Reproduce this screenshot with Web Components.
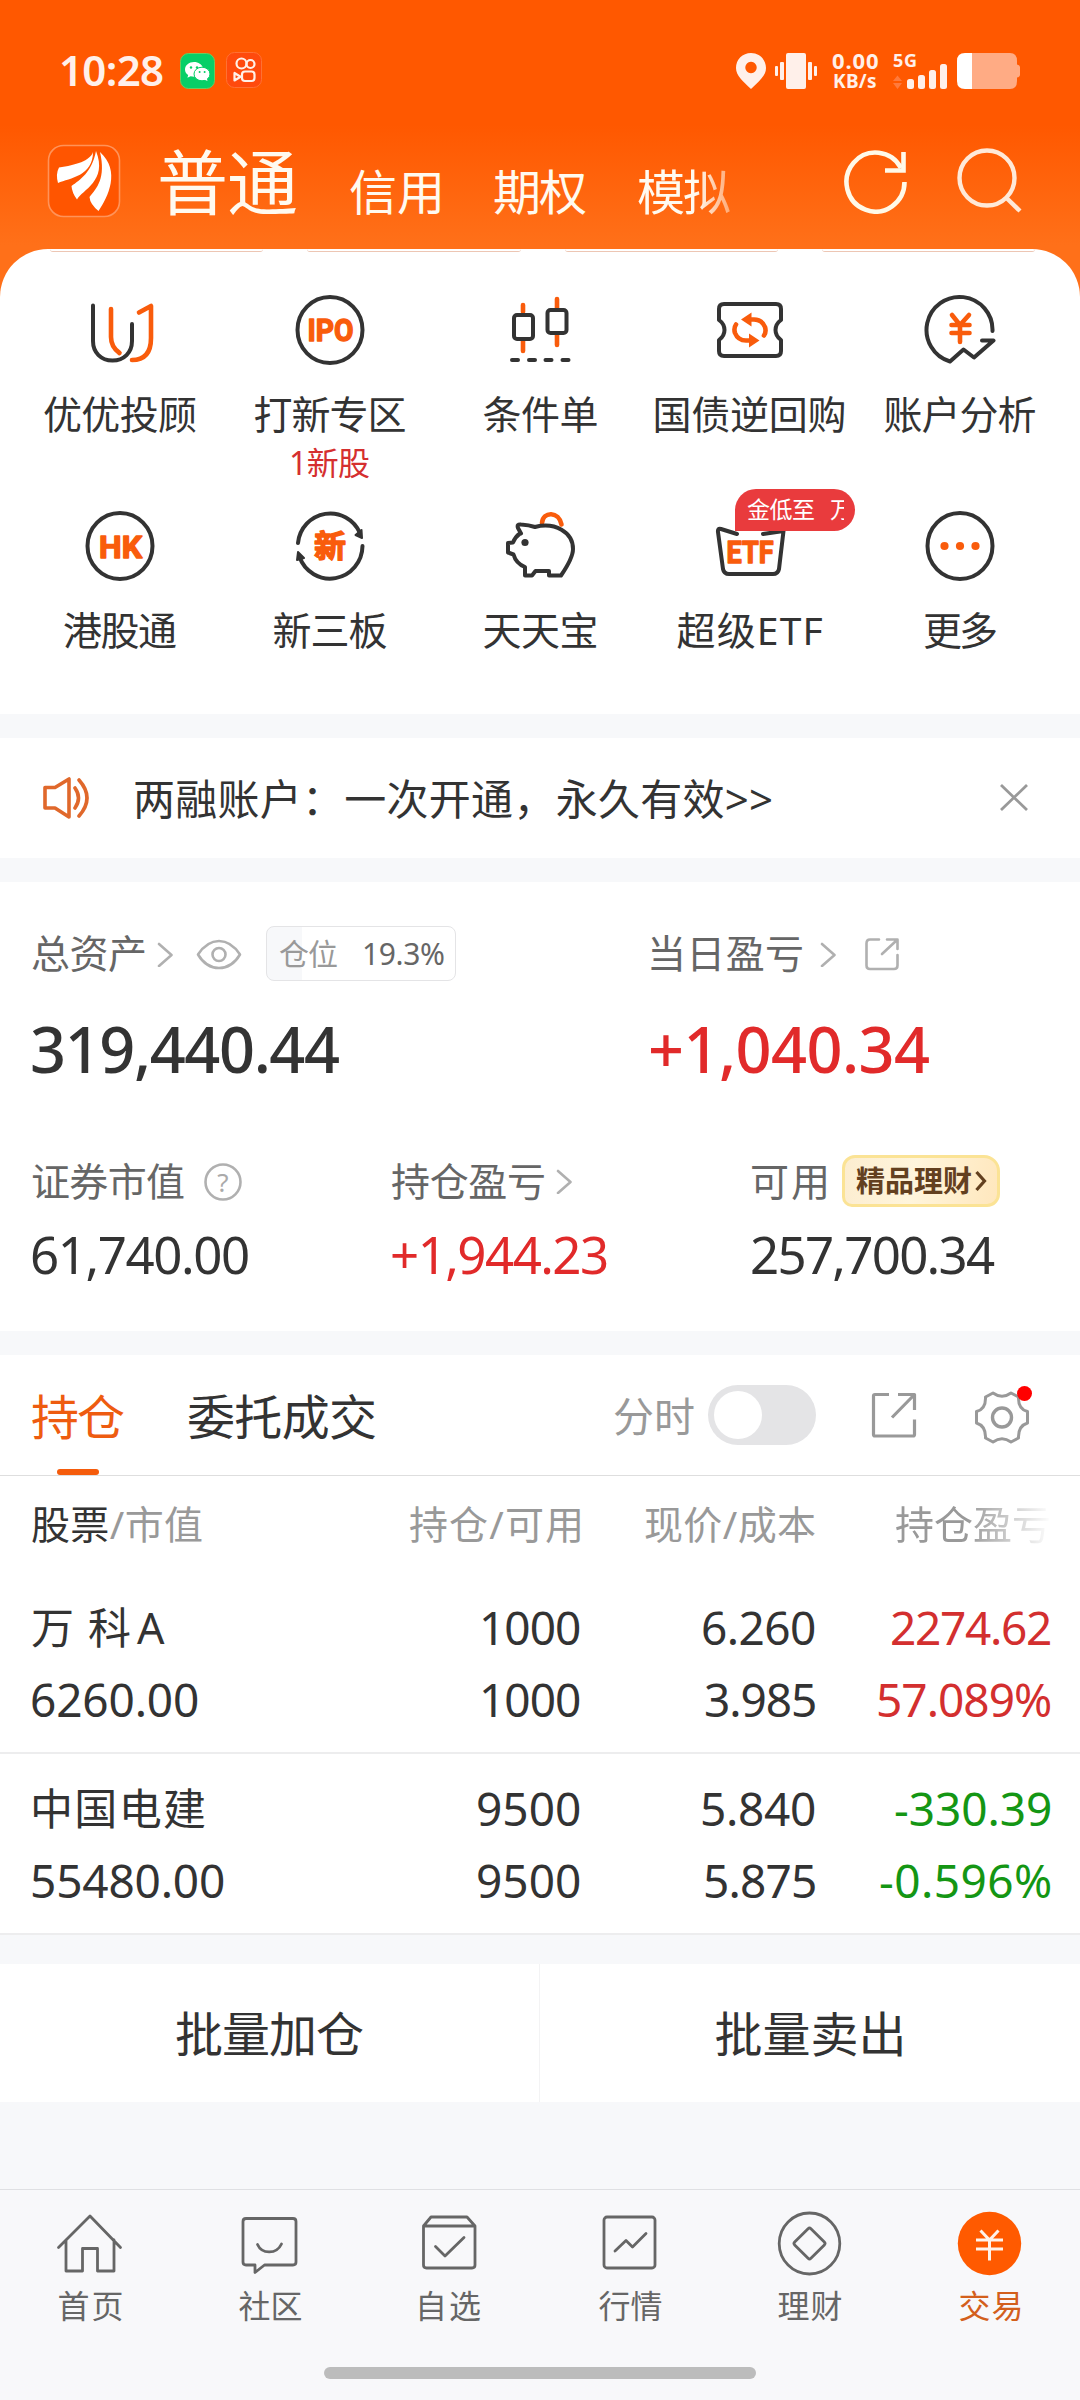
<!DOCTYPE html>
<html lang="zh-CN">
<head>
<meta charset="utf-8">
<title>交易</title>
<style>
html,body{margin:0;padding:0}
body{width:1080px;height:2400px;overflow:hidden;background:#f7f8fa;color:#333;font-family:"Noto Sans","Noto Sans CJK SC",sans-serif}
</style>
</head>
<body>
<trade-app></trade-app>
<script>
const FONT = '"Noto Sans","Noto Sans CJK SC",sans-serif';
const ctx = document.createElement('canvas').getContext('2d');

function define(name, html, setup) {
  const tpl = document.createElement('template');
  tpl.innerHTML = html;
  customElements.define(name, class extends HTMLElement {
    connectedCallback() {
      if (this.shadowRoot) return;
      const root = this.attachShadow({ mode: 'open' });
      root.append(document.importNode(tpl.content, true));
      if (setup) setup.call(this, root);
    }
  });
}

/* One line of text, tracked so that its ink spans exactly w pixels. */
define('fit-text', `<style>
:host{display:block;flex:none;white-space:pre;line-height:1.2}
span{display:inline-block}
</style><span><slot></slot></span>`, function (root) {
  const text = this.textContent, n = [...text].length;
  const size = +this.getAttribute('size'), w = +this.getAttribute('w'), weight = this.getAttribute('weight') || 400;
  ctx.font = `${weight} ${size}px ${FONT}`;
  const m = ctx.measureText(text);
  const ink = m.actualBoundingBoxRight + m.actualBoundingBoxLeft;
  const ls = n > 1 ? (w - ink) / (n - 1) : 0;
  this.style.width = w + 'px';
  this.style.fontSize = size + 'px';
  this.style.fontWeight = weight;
  const s = root.querySelector('span');
  s.style.letterSpacing = ls + 'px';
  s.style.marginLeft = m.actualBoundingBoxLeft + 'px';
  s.style.marginRight = '-60px';
});

const D = 'fill="none" stroke="#333" stroke-width="4" stroke-linecap="round" stroke-linejoin="round"';
const O = 'fill="none" stroke="#f95c0c" stroke-width="4.6" stroke-linecap="round" stroke-linejoin="round"';
const G = 'fill="none" stroke="#666" stroke-width="2.8" stroke-linecap="round" stroke-linejoin="round"';
const L = 'fill="none" stroke="#b0b0b0" stroke-width="2.6" stroke-linecap="round" stroke-linejoin="round"';
const word = (x, y, w, s, t) => `<text x="${x}" y="${y}" textLength="${w}" lengthAdjust="spacingAndGlyphs" font-family='Roboto,"Noto Sans CJK SC",sans-serif' font-size="${s}" font-weight="700" fill="#f95c0c" stroke="#f95c0c" stroke-width="1.4" stroke-linejoin="round">${t}</text>`;

/* name: [viewBox x, y, width, height, drawing] */
const ICONS = {
  wechat: [180, 53, 35, 36, `<rect x="180.5" y="53.5" width="34" height="35" rx="8" fill="#07cf67" stroke="#6ccb5e"/><path fill="#fff" d="M194 62c-5 0-9 3.400-9 7.500 0 2.300 1.300 4.200 3.200 5.600l-.8 2.700 3.200-1.600c1 .3 2.300.5 3.500.5a9 7.800 0 0 1 8.800-9C202 64.500 198.500 62 194 62z"/><ellipse cx="202" cy="74" rx="8" ry="6.800" fill="#fff" stroke="#07cf67" stroke-width="1"/><path fill="#fff" d="M203 79l4.500 2-1-4z"/><g fill="#07cf67"><circle cx="191" cy="67.500" r="1.200"/><circle cx="197" cy="67.500" r="1.200"/><circle cx="199.600" cy="72" r="1"/><circle cx="204.600" cy="72" r="1"/></g>`],
  kwai: [226, 53, 36, 36, `<rect x="226.500" y="53.500" width="35" height="35" rx="8" fill="#ff4a0d" stroke="#ff7034"/><g fill="none" stroke="#fff0e8" stroke-width="2.200" stroke-linejoin="round"><circle cx="241.500" cy="64.500" r="5"/><circle cx="250.500" cy="65" r="4"/><rect x="242" y="72.500" width="12.500" height="9.500" rx="3"/><path d="M234.500 74v7.500l6-3.700z"/></g>`],
  pin: [735, 52, 32, 38, `<path fill="#fff0ea" fill-rule="evenodd" d="M751 53c8.500 0 15 6.500 15 15 0 8-7 13-15 21-8-8-15-13-15-21 0-8.500 6.500-15 15-15zm0 8.800a5.700 5.700 0 1 0 .01 0z"/>`],
  vibrate: [774, 52, 44, 38, `<g fill="#fff0ea"><rect x="786" y="53" width="20" height="36" rx="2"/><rect x="780" y="62" width="4" height="18" rx="1"/><rect x="775" y="66" width="3" height="10" rx="1"/><rect x="808" y="62" width="4" height="18" rx="1"/><rect x="814" y="66" width="3" height="10" rx="1"/></g>`],
  bars: [892, 64, 56, 26, `<path fill="#ff7a3c" d="M893 81l4.500-5.500 4.500 5.500zm0 2h9l-4.500 6z"/><g fill="#fff0ea"><rect x="907" y="79" width="7" height="10" rx="2.500"/><rect x="918" y="75" width="7" height="14" rx="2.500"/><rect x="929" y="70" width="7" height="19" rx="2.500"/><rect x="940" y="64" width="7" height="25" rx="2.500"/></g>`],
  battery: [956, 52, 66, 38, `<path fill="#ffab84" d="M972 53h38q7 0 7 8v3.500q3 .5 3 3v7q0 2.500-3 3v3.500q0 8-7 8h-38z"/><path fill="#fff" d="M972 53h-7q-8 0-8 8v20q0 8 8 8h7z"/>`],
  logo: [47, 144, 74, 74, `<rect x="48.500" y="145.500" width="71" height="71" rx="15" fill="#ff5500" stroke="#ff9359" stroke-width="1.600"/><g fill="#fff"><path d="M93 152C90 161 76 165 59 167.500Q55.500 174 58 183C70 178 93 176 93 152z"/><path d="M96 151C92 172 80 180 71.500 186Q72 193 77 199.500C82 190 108 181 96 151z"/><path d="M100 152C106 178 97 188 89.500 197Q90 204 98.500 211C108 197 121 171 100 152z"/></g>`],
  refresh: [843, 149, 66, 66, `<g fill="none" stroke="#fff9e8" stroke-width="4.600"><path d="M904.500 183A29 29.500 0 1 1 901 169"/><path d="M903.500 153V171.500H885"/></g>`],
  search: [956, 147, 66, 68, `<g fill="none" stroke="#ffe9d8" stroke-width="4.400"><circle cx="987" cy="178" r="27.500"/><path d="M1006 197.500l14 13.500"/></g>`],
  uu: [84, 294, 72, 72, `<path ${D} d="M93 305.500V341C93 352.500 101 360.500 112.500 360.500S132 352.500 132 341V324"/><path ${O} d="M111 309V337Q111 347 119.500 353M139 312.500L151 306V338Q151 360 132 360"/>`],
  ipo: [294, 294, 72, 72, `<ellipse ${D} cx="330" cy="330" rx="32.500" ry="33"/>${word(307.500, 341, 46, 31, 'IPO')}`],
  candle: [504, 294, 72, 72, `<path ${O} d="M523 305V312M523 340V351M557 299V308M557 334V345"/><rect ${D} x="514" y="315" width="19" height="24" rx="3"/><rect ${D} x="547.500" y="310" width="19" height="23" rx="3"/><path ${D} d="M512 360h6M529 360h6M545.500 360h6M562.500 360h6"/>`],
  ticket: [714, 294, 72, 72, `<path ${D} d="M724 304H776Q781 304 781 309V320Q775.500 324 775.500 330T781 340V351Q781 356 776 356H724Q719 356 719 351V340Q724.500 336 724.500 330T719 320V309Q719 304 724 304Z"/><path ${O} d="M736 324.500Q733.500 328 735 333Q738 340.500 746 340.500H750M764 335.500Q766.500 332 765 327Q762 319.500 754 319.500H750"/><path fill="#f95c0c" d="M749 333.500l10.500 7-10.500 7zM751.500 312.500l-10.500 7 10.500 7z"/>`],
  account: [924, 294, 72, 72, `<path ${D} d="M992.500 331A33 33 0 1 0 950 361.500L963.500 349.500 974 357.500 993.500 340.500H982"/><path ${O} stroke-width="5" d="M952 315L960 325 969 315M960 325V342M951.500 325H969.500M951.500 333H969.500"/>`],
  hk: [84, 510, 72, 72, `<ellipse ${D} cx="120" cy="546" rx="32.500" ry="33"/>${word(99, 557.500, 43, 32, 'HK')}`],
  xin: [294, 510, 72, 72, `<path ${D} d="M298 543A32.500 33 0 0 1 360 533M362.500 546A32.500 33 0 0 1 299.500 557"/><path fill="#333" stroke="#333" stroke-width="2" stroke-linejoin="round" d="M355.500 535l6-5 .5 8zM297 560l1-8 6 6z"/>${word(314, 556.500, 32, 31, '新')}`],
  pig: [504, 510, 72, 72, `<path ${O} stroke-width="5" d="M542 523C543 511 559 511 561.500 524.500"/><path ${D} d="M521 533.500L518 528Q516.500 524 521 524.500Q529 525 535 527C555 522 573 532 573 549Q573 558 561 575.500H549V571H535.500L532 575.500H525V567Q516 563.500 513.500 554.500L508 552.500V543L513 542.500Q515.500 536.500 520 533.500"/><circle cx="525" cy="542.500" r="3.600" fill="#333"/>`],
  etf: [714, 510, 72, 72, `<path ${D} d="M737 534L721 529Q717.500 528 718 532L723 569Q724 574 729 574H773Q778 574 779 569L783.500 531L763 534"/>${word(726.500, 563, 47, 31, 'ETF')}`],
  more: [924, 510, 72, 72, `<ellipse ${D} cx="960" cy="546" rx="32.500" ry="33"/><g fill="#f95c0c"><circle cx="944.500" cy="546" r="4.100"/><circle cx="960" cy="546" r="4.100"/><circle cx="975.500" cy="546" r="4.100"/></g>`],
  speaker: [42, 777, 48, 42, `<g fill="none" stroke="#e0682b" stroke-width="3.600" stroke-linejoin="round" stroke-linecap="round"><path d="M45 787.500H55L69 779V817L55 808H45Z"/><path d="M75 788Q82 798 75 808M79 780Q95 798 79 816"/></g>`],
  close: [999, 784, 30, 30, `<path d="M1001 786l26 25M1027 786l-26 25" stroke="#999" stroke-width="2.800"/>`],
  chevron: [156, 941, 18, 26, `<path ${L} d="M159 944l12.500 11L159 966"/>`],
  eye: [196, 936, 46, 34, `<path ${L} d="M198 953.500Q207 940 219 940T240 953.500Q232 967 219 967T198 953.500Z"/><circle ${L} cx="219" cy="953.500" r="6.500"/>`],
  share: [864, 937, 36, 34, `<path ${L} d="M879 939.500H870Q866.500 939.500 866.500 943.500V965.500Q866.500 969 870 969H894Q897.500 969 897.500 965.500V955M882 954L897 940M887 939.500H897.500V949"/>`],
  share2: [869, 1390, 50, 50, `<path fill="none" stroke="#999" stroke-width="3.200" stroke-linejoin="round" d="M889 1394.500H875Q873.500 1394.500 873.500 1396V1434.500Q873.500 1436 875 1436H913Q914.500 1436 914.500 1434.500V1419.500M892 1417.500L914 1395M898 1394.500H914.500V1410"/>`],
  help: [203, 1162, 40, 40, `<circle ${L} cx="223" cy="1183" r="17.500"/>`],
  gear: [974, 1386, 56, 58, `<g fill="none" stroke="#999" stroke-width="3" stroke-linejoin="round"><path d="M993 1391Q1002 1397.500 1011 1391L1018.500 1395Q1018 1407 1027.500 1409.500V1421Q1018 1424 1018.500 1436L1011 1440Q1002 1433.500 993 1440L985.500 1436Q986 1424 976.500 1421V1409.500Q986 1407 985.500 1395Z"/><circle cx="1002" cy="1415.500" r="9.500" stroke-width="3.400"/></g>`],
  gold: [974, 1172, 14, 22, `<path d="M976.500 1174l8 9-8 9" fill="none" stroke="#63401f" stroke-width="3.200"/>`],
  home: [54, 2208, 72, 72, `<path ${G} d="M58.500 2247.500L90 2216 120.500 2247.500M66 2240V2271H82.500V2248.500H97.500V2271H114V2240"/>`],
  chat: [234, 2208, 72, 72, `<path ${G} d="M246 2218.500H293Q296 2218.500 296 2221.500V2262Q296 2265 293 2265H264.500L255 2272.500V2265H246Q243 2265 243 2262V2221.500Q243 2218.500 246 2218.500Z"/><path ${G} d="M257.500 2244.500C262 2254.500 276.500 2254.500 281.500 2244"/>`],
  pick: [414, 2208, 72, 72, `<path ${G} d="M423.500 2226L431 2217H467L475 2226V2265Q475 2268 472 2268H426.500Q423.500 2268 423.500 2265ZH475M435.500 2246.500L445 2256 464 2237.500"/>`],
  chart: [594, 2208, 72, 72, `<rect ${G} x="604" y="2217" width="51" height="51" rx="3"/><path ${G} d="M615 2251L626 2240.500 632.500 2247 646 2233.500"/>`],
  coin: [774, 2208, 72, 72, `<ellipse ${G} cx="809.500" cy="2243.500" rx="30.300" ry="30.500"/><rect ${G} x="798" y="2232" width="23" height="23" rx="2" transform="rotate(45 809.500 2243.500)"/>`],
  trade: [954, 2208, 72, 72, `<circle cx="989.500" cy="2243.500" r="31.700" fill="#ff5a00"/><path fill="none" stroke="#fff3ea" stroke-width="3" d="M980.500 2230.500L989.500 2240 998.500 2230.500M989.500 2240V2260.500M976 2240H1003M976 2249H1003"/>`]
};
define('ui-icon', `<style>:host{display:block;flex:none}svg{display:block}</style>`, function (root) {
  const [x, y, w, h, body] = ICONS[this.getAttribute('name')];
  const box = document.createElement('div');
  box.innerHTML = `<svg width="${w}" height="${h}" viewBox="${x} ${y} ${w} ${h}">${body}</svg>`;
  root.append(box);
});

define('status-bar', `<style>
:host{display:flex;height:34px;padding:53px 58px 0 61px;align-items:flex-start;color:#fff0ea}
.time{margin-top:-8px}.space{flex:1}
.net,.sig{display:flex;flex-direction:column}
.net{width:46px;align-items:center;margin:-3px 14px 0}
.net fit-text{height:21px;line-height:21px}
.sig{width:56px;margin-right:8px;height:38px}
.sig fit-text{height:12px;line-height:14px;margin-left:1px}
ui-icon{margin-top:-1px}
</style>
<fit-text class="time" size="42" weight="600" w="102">10:28</fit-text>
<ui-icon name="wechat" style="margin:0 11px 0 17px"></ui-icon><ui-icon name="kwai"></ui-icon>
<div class="space"></div>
<ui-icon name="pin" style="margin-right:7px"></ui-icon><ui-icon name="vibrate"></ui-icon>
<div class="net"><fit-text size="22" weight="700" w="46">0.00</fit-text><fit-text size="19" weight="700" w="42">KB/s</fit-text></div>
<div class="sig"><fit-text size="18" weight="700" w="23">5G</fit-text><ui-icon name="bars"></ui-icon></div>
<ui-icon name="battery"></ui-icon>`);

define('app-header', `<style>
:host{display:flex;align-items:center;height:74px;padding:57px 58px 0 47px;color:#fffaf0}
.sub{margin-top:22px}.fade{-webkit-mask-image:linear-gradient(90deg,#000 58px,rgba(0,0,0,.45) 92px);mask-image:linear-gradient(90deg,#000 58px,rgba(0,0,0,.45) 92px)}
</style>
<ui-icon name="logo"></ui-icon>
<fit-text size="71" w="136" style="margin:2px 0 0 39px">普通</fit-text>
<fit-text class="sub" size="48" w="90" style="margin-left:54px">信用</fit-text>
<fit-text class="sub" size="48" w="92" style="margin-left:54px">期权</fit-text>
<fit-text class="sub fade" size="48" w="92" style="margin-left:52px">模拟</fit-text>
<ui-icon name="refresh" style="margin-left:auto"></ui-icon>
<ui-icon name="search" style="margin-left:47px"></ui-icon>`);

define('tool-item', `<style>
:host{display:flex;flex-direction:column;align-items:center;width:210px;height:216px;position:relative}
.label{margin-top:24px;height:48px;line-height:48px}
.note{color:#d52f2f;height:40px;line-height:40px;margin-top:5px}
</style><slot></slot>`, function (root) {
  const i = document.createElement('ui-icon');
  i.setAttribute('name', this.getAttribute('icon'));
  root.querySelector('style').after(i);
  const t = document.createElement('fit-text');
  t.className = 'label'; t.setAttribute('size', 39); t.setAttribute('w', this.getAttribute('w'));
  t.textContent = this.getAttribute('label');
  i.after(t);
  if (this.hasAttribute('note')) {
    const n = document.createElement('fit-text');
    n.className = 'note'; n.setAttribute('size', 32); n.setAttribute('w', 78);
    n.textContent = this.getAttribute('note');
    t.after(n);
  }
});

define('promo-badge', `<style>
:host{position:absolute;left:90px;top:-21px;width:120px;height:42px;border-radius:21px 21px 21px 0;background:#e93b3d;color:#fff;display:flex;align-items:center;z-index:1}
.cut{overflow:hidden;width:14px;margin-left:16px}
</style><fit-text size="23" w="67" style="margin-left:12px">金低至</fit-text><fit-text class="cut" size="23" w="14">万</fit-text>`);

define('tool-grid', `<style>
:host{display:block;height:465px;background:#fff;border-radius:48px 48px 0 0;box-sizing:border-box}
.edge{display:flex;height:3px;padding:0 45px 0 50px;gap:44px;box-sizing:border-box;margin-bottom:42px}
.edge i{flex:1;border-bottom:1px solid #edc6b4;border-radius:0 0 20px 20px;height:2px}
.grid{display:grid;grid-template-columns:repeat(5,210px);padding-left:15px}
</style>
<div class="edge"><i></i><i></i><i></i><i></i></div>
<div class="grid">
<tool-item icon="uu" label="优优投顾" w="152"></tool-item>
<tool-item icon="ipo" label="打新专区" w="151" note="1新股"></tool-item>
<tool-item icon="candle" label="条件单" w="113"></tool-item>
<tool-item icon="ticket" label="国债逆回购" w="189"></tool-item>
<tool-item icon="account" label="账户分析" w="151"></tool-item>
<tool-item icon="hk" label="港股通" w="112"></tool-item>
<tool-item icon="xin" label="新三板" w="113"></tool-item>
<tool-item icon="pig" label="天天宝" w="113"></tool-item>
<tool-item icon="etf" label="超级ETF" w="145"><promo-badge></promo-badge></tool-item>
<tool-item icon="more" label="更多" w="72"></tool-item>
</div>`);

define('notice-bar', `<style>
:host{display:flex;align-items:center;height:120px;margin-top:24px;padding:0 51px 0 42px;background:#fff}
fit-text{margin:2px 0 0 45px}
ui-icon[name=close]{margin-left:auto}
</style><ui-icon name="speaker"></ui-icon><fit-text size="42" w="636">两融账户：一次开通，永久有效&gt;&gt;</fit-text><ui-icon name="close"></ui-icon>`);

define('asset-panel', `<style>
:host{display:block;height:449px;margin-top:24px;background:#fff;color:#666;overflow:hidden}
.row{display:grid}.two{grid-template-columns:651px 1fr}.three{grid-template-columns:392px 360px 1fr}
.cell{display:flex;align-items:center;min-height:0}.two .cell:first-child,.three .cell:first-child{padding-left:32px}
.a{height:143px}.b{height:48px;color:#333;line-height:48px}.c{height:52px;margin-top:82px}.d{height:60px;margin-top:17px;color:#333}
.b fit-text{line-height:48px}.d fit-text{line-height:60px}
.red{color:#e12a2a}
.pos{display:flex;align-items:center;box-sizing:border-box;width:190px;height:55px;margin-left:24px;padding-left:12px;gap:27px;border:1.500px solid #e4e4e6;border-radius:8px;background:linear-gradient(90deg,#f7f8fa 35px,#fff 35px);color:#666}
.q{position:relative;margin-left:19px}
.q span{position:absolute;left:0;top:1px;width:40px;text-align:center;font-size:26px;line-height:40px;color:#aaa}
.gold{display:flex;align-items:center;box-sizing:border-box;width:158px;height:52px;margin-left:16px;padding-left:11px;gap:3px;border:3px solid #fbe395;border-radius:13px 16px 13px 10px;background:linear-gradient(100deg,#fcedd0,#fff5dc 45%,#ffe7bd);color:#63401f}
</style>
<div class="row two a"><div class="cell"><fit-text size="39" w="113">总资产</fit-text><ui-icon name="chevron" style="margin:0 22px 0 11px"></ui-icon><ui-icon name="eye"></ui-icon>
<div class="pos"><fit-text size="30" w="58" style="color:#999">仓位</fit-text><fit-text size="30" w="80">19.3%</fit-text></div></div>
<div class="cell"><fit-text size="39" w="151">当日盈亏</fit-text><ui-icon name="chevron" style="margin:0 27px 0 17px"></ui-icon><ui-icon name="share"></ui-icon></div></div>
<div class="row two b"><div class="cell"><fit-text size="63" weight="500" w="307">319,440.44</fit-text></div><div class="cell red"><fit-text size="63" weight="500" w="278">+1,040.34</fit-text></div></div>
<div class="row three c"><div class="cell"><fit-text size="39" w="152">证券市值</fit-text><div class="q"><ui-icon name="help"></ui-icon><span>?</span></div></div>
<div class="cell"><fit-text size="39" w="152">持仓盈亏</fit-text><ui-icon name="chevron" style="margin-left:11px"></ui-icon></div>
<div class="cell"><fit-text size="39" w="74">可用</fit-text><div class="gold"><fit-text size="29" weight="700" w="115">精品理财</fit-text><ui-icon name="gold"></ui-icon></div></div></div>
<div class="row three d"><div class="cell"><fit-text size="51" w="216">61,740.00</fit-text></div><div class="cell red"><fit-text size="51" w="215">+1,944.23</fit-text></div><div class="cell"><fit-text size="51" w="243">257,700.34</fit-text></div></div>`);

define('holding-row', `<style>
:host{display:grid;grid-template-rows:72px 72px;grid-template-columns:380px 168px 235px 235px;box-sizing:border-box;height:181px;padding:19px 0 0 32px;border-bottom:2px solid #ededee;align-items:center}
::slotted(:nth-child(4n+2)),::slotted(:nth-child(4n+3)),::slotted(:nth-child(4n)){justify-self:end}
::slotted(:nth-child(4n)){color:var(--pl)}
</style><slot></slot>`);

define('holdings-panel', `<style>
:host{display:block;margin-top:24px;background:#fff}
.tabs{display:flex;align-items:center;height:121px;box-sizing:border-box;border-bottom:1px solid #dedede;padding:3px 0 0 32px;position:relative}
.on{color:#ee5c10}.bar{position:absolute;left:57px;bottom:0;width:42px;height:6px;border-radius:3px;background:#f55c0c}
.sw{width:108px;height:60px;border-radius:30px;background:#e4e4e6;margin:-3px 53px 0 14px;display:flex;align-items:center;padding-left:6px;box-sizing:border-box}
.sw i{width:48px;height:48px;border-radius:50%;background:#fff}
.tabs ui-icon{margin-top:-3px}
.gear{position:relative;margin:3px 0 0 55px}.gear i{position:absolute;left:43px;top:-4px;width:15px;height:15px;border-radius:50%;background:#f00}
.gear ui-icon{margin-top:-2px}
.head{display:grid;grid-template-columns:380px 168px 235px 1fr;height:97px;padding-left:32px;align-items:center;color:#999}
.head>:nth-child(2),.head>:nth-child(3){justify-self:end}.head>:nth-child(4){margin-left:81px;-webkit-mask-image:linear-gradient(90deg,#000 70px,transparent 156px);mask-image:linear-gradient(90deg,#000 70px,transparent 156px)}
.up{--pl:#d32f2f}.down{--pl:#149614}
b{font-weight:400;color:#333}
</style>
<div class="tabs"><fit-text class="on" size="48" w="92">持仓</fit-text><fit-text size="48" w="187" style="margin-left:64px">委托成交</fit-text>
<fit-text size="41" w="80" style="margin-left:239px;color:#999">分时</fit-text><div class="sw"><i></i></div><ui-icon name="share2"></ui-icon><div class="gear"><ui-icon name="gear"></ui-icon><i></i></div><div class="bar"></div></div>
<div class="head"><fit-text size="39" w="170"><b>股票</b>/市值</fit-text><fit-text size="39" w="170">持仓/可用</fit-text><fit-text size="39" w="170">现价/成本</fit-text><fit-text size="39" w="153">持仓盈亏</fit-text></div>
<holding-row class="up"><fit-text size="43" w="142" style="word-spacing:-9px">万 科A</fit-text><fit-text size="46" w="97">1000</fit-text><fit-text size="46" w="112">6.260</fit-text><fit-text size="46" w="158">2274.62</fit-text><fit-text size="46" w="166">6260.00</fit-text><fit-text size="46" w="97">1000</fit-text><fit-text size="46" w="109">3.985</fit-text><fit-text size="46" w="172">57.089%</fit-text></holding-row>
<holding-row class="down"><fit-text size="43" w="171" style="margin-left:2px">中国电建</fit-text><fit-text size="46" w="102">9500</fit-text><fit-text size="46" w="113">5.840</fit-text><fit-text size="46" w="155">-330.39</fit-text><fit-text size="46" w="192">55480.00</fit-text><fit-text size="46" w="102">9500</fit-text><fit-text size="46" w="110">5.875</fit-text><fit-text size="46" w="170">-0.596%</fit-text></holding-row>`);

define('batch-bar', `<style>
:host{display:grid;grid-template-columns:539px 541px;height:138px;margin-top:29px;background:#fff}
div{display:flex;align-items:center;justify-content:center;padding-top:1px}
div+div{border-left:1px solid #f3f3f4;padding-right:3px}
</style><div><fit-text size="48" w="187">批量加仓</fit-text></div><div><fit-text size="48" w="186">批量卖出</fit-text></div>`);

define('tab-bar', `<style>
:host{display:block;height:212px;box-sizing:border-box;border-top:1px solid #dfe0e3;margin-top:87px;background:#f8f8fa;color:#666}
.items{display:grid;grid-template-columns:repeat(6,180px);height:176px}
.items div{display:flex;flex-direction:column;align-items:center;padding-top:18px}
.items fit-text{height:40px;line-height:40px;margin-top:6px}
.on{color:#d35f1c}
.pill{width:432px;height:12px;border-radius:6px;background:#bcbcbc;margin:1px auto 0}
</style>
<div class="items">
<div><ui-icon name="home"></ui-icon><fit-text size="32" w="63">首页</fit-text></div>
<div><ui-icon name="chat"></ui-icon><fit-text size="32" w="63">社区</fit-text></div>
<div><ui-icon name="pick"></ui-icon><fit-text size="32" w="60">自选</fit-text></div>
<div><ui-icon name="chart"></ui-icon><fit-text size="32" w="63">行情</fit-text></div>
<div><ui-icon name="coin"></ui-icon><fit-text size="32" w="63">理财</fit-text></div>
<div class="on"><ui-icon name="trade"></ui-icon><fit-text size="32" w="61">交易</fit-text></div>
</div><div class="pill"></div>`);

define('trade-app', `<style>
:host{display:block;width:1080px;height:2400px;background:#f7f8fa}
.top{height:300px;background:linear-gradient(#ff5800 0,#ff5800 125px,#ff7019 245px);margin-bottom:-51px}
</style>
<div class="top"><status-bar></status-bar><app-header></app-header></div>
<tool-grid></tool-grid><notice-bar></notice-bar><asset-panel></asset-panel><holdings-panel></holdings-panel><batch-bar></batch-bar><tab-bar></tab-bar>`);
</script>
</body>
</html>
